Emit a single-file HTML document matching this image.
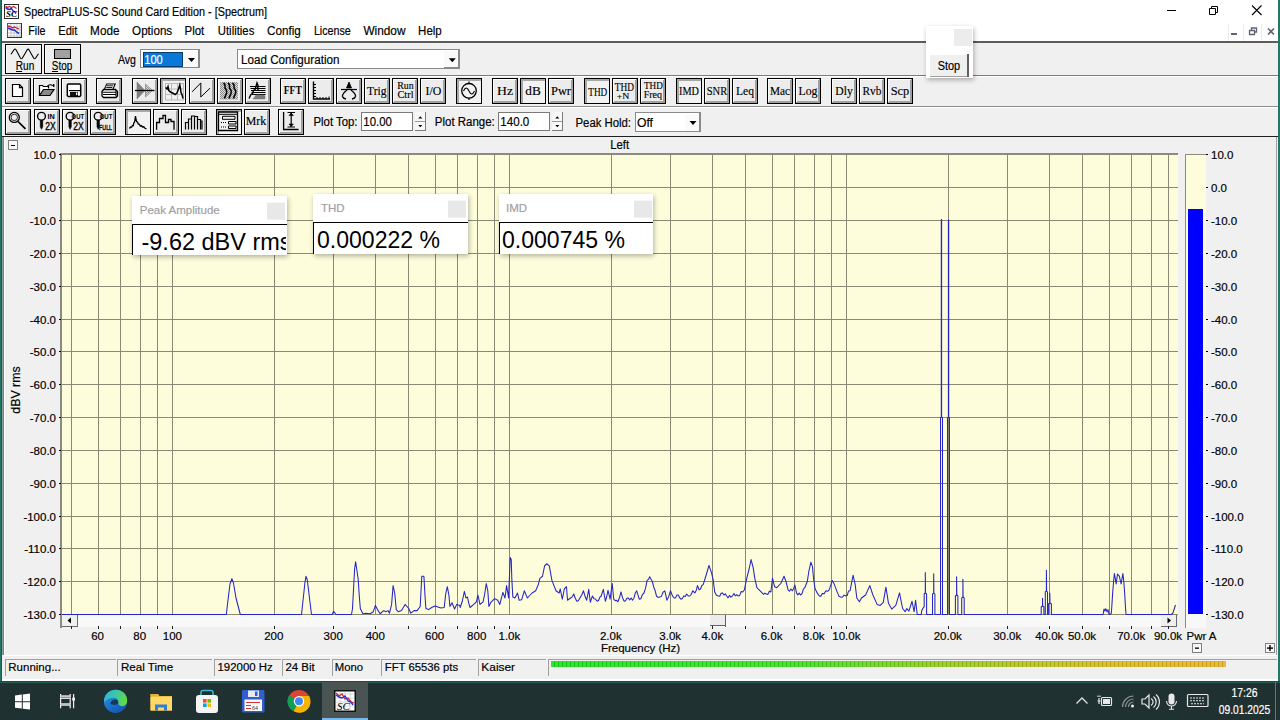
<!DOCTYPE html><html><head><meta charset="utf-8"><title>SpectraPLUS-SC</title><style>html,body{margin:0;padding:0;width:1280px;height:720px;overflow:hidden;background:#f0f0f0}svg{display:block}</style></head><body>
<svg width="1280" height="720" viewBox="0 0 1280 720">
<rect x="0" y="0" width="1280" height="720" fill="#f0f0f0" />
<rect x="0" y="0" width="1280" height="41" fill="#ffffff" />
<rect x="0" y="41" width="1280" height="2" fill="#5c5c5c" />
<rect x="0" y="75" width="1280" height="1" fill="#7a7a7a" />
<rect x="0" y="76" width="1280" height="1" fill="#ffffff" />
<rect x="0" y="106" width="1280" height="1" fill="#8a8a8a" />
<rect x="0" y="107" width="1280" height="1" fill="#ffffff" />
<rect x="0" y="136" width="1280" height="1" fill="#202020" />
<text x="24" y="15.6" font-family='"Liberation Sans", sans-serif' font-size="12" fill="#000" text-anchor="start" textLength="243" lengthAdjust="spacingAndGlyphs" stroke="#000" stroke-width="0.18" >SpectraPLUS-SC Sound Card Edition - [Spectrum]</text>
<text x="28.25" y="34.7" font-family='"Liberation Sans", sans-serif' font-size="12" fill="#000" text-anchor="start" textLength="17.2" lengthAdjust="spacingAndGlyphs" stroke="#000" stroke-width="0.18" >File</text>
<text x="58.25" y="34.7" font-family='"Liberation Sans", sans-serif' font-size="12" fill="#000" text-anchor="start" textLength="19.2" lengthAdjust="spacingAndGlyphs" stroke="#000" stroke-width="0.18" >Edit</text>
<text x="90.1" y="34.7" font-family='"Liberation Sans", sans-serif' font-size="12" fill="#000" text-anchor="start" textLength="29.4" lengthAdjust="spacingAndGlyphs" stroke="#000" stroke-width="0.18" >Mode</text>
<text x="132.1" y="34.7" font-family='"Liberation Sans", sans-serif' font-size="12" fill="#000" text-anchor="start" textLength="40.1" lengthAdjust="spacingAndGlyphs" stroke="#000" stroke-width="0.18" >Options</text>
<text x="184.5" y="34.7" font-family='"Liberation Sans", sans-serif' font-size="12" fill="#000" text-anchor="start" textLength="19.8" lengthAdjust="spacingAndGlyphs" stroke="#000" stroke-width="0.18" >Plot</text>
<text x="217.8" y="34.7" font-family='"Liberation Sans", sans-serif' font-size="12" fill="#000" text-anchor="start" textLength="36.5" lengthAdjust="spacingAndGlyphs" stroke="#000" stroke-width="0.18" >Utilities</text>
<text x="267.0" y="34.7" font-family='"Liberation Sans", sans-serif' font-size="12" fill="#000" text-anchor="start" textLength="33.8" lengthAdjust="spacingAndGlyphs" stroke="#000" stroke-width="0.18" >Config</text>
<text x="313.9" y="34.7" font-family='"Liberation Sans", sans-serif' font-size="12" fill="#000" text-anchor="start" textLength="36.9" lengthAdjust="spacingAndGlyphs" stroke="#000" stroke-width="0.18" >License</text>
<text x="363.4" y="34.7" font-family='"Liberation Sans", sans-serif' font-size="12" fill="#000" text-anchor="start" textLength="42.1" lengthAdjust="spacingAndGlyphs" stroke="#000" stroke-width="0.18" >Window</text>
<text x="418.1" y="34.7" font-family='"Liberation Sans", sans-serif' font-size="12" fill="#000" text-anchor="start" textLength="23.6" lengthAdjust="spacingAndGlyphs" stroke="#000" stroke-width="0.18" >Help</text>
<rect x="5" y="44" width="37" height="30" fill="#000" />
<rect x="6" y="45" width="35" height="28" fill="#ffffff" />
<rect x="7" y="46" width="34" height="27" fill="#efefef" />
<rect x="44" y="44" width="37" height="30" fill="#000" />
<rect x="45" y="45" width="35" height="28" fill="#ffffff" />
<rect x="46" y="46" width="34" height="27" fill="#efefef" />
<path d="M11,54.3 L14,49.8 Q15,48.3 16,49.8 L20.4,58 Q21.4,59.6 22.4,58 L27.1,50 Q28.1,48.3 29.1,50 L33.6,58 Q34.6,59.6 35.6,58 L38.5,53.7" fill="none" stroke="#000" stroke-width="1.1"/>
<text x="15.8" y="69.8" font-family='"Liberation Sans", sans-serif' font-size="12" fill="#000" text-anchor="start" textLength="18.5" lengthAdjust="spacingAndGlyphs" stroke="#000" stroke-width="0.18" >Run</text>
<rect x="16" y="71" width="6" height="1" fill="#000" />
<rect x="54" y="49" width="17" height="10" fill="#000" />
<rect x="55" y="50" width="15" height="8" fill="#a0a0a0" />
<text x="51.8" y="69.8" font-family='"Liberation Sans", sans-serif' font-size="12" fill="#000" text-anchor="start" textLength="20.5" lengthAdjust="spacingAndGlyphs" stroke="#000" stroke-width="0.18" >Stop</text>
<rect x="52" y="71" width="6" height="1" fill="#000" />
<text x="118" y="63.5" font-family='"Liberation Sans", sans-serif' font-size="12" fill="#000" text-anchor="start" textLength="18" lengthAdjust="spacingAndGlyphs" stroke="#000" stroke-width="0.18" >Avg</text>
<rect x="140" y="49" width="60" height="19" fill="#8a8a8a" />
<rect x="141" y="50" width="58" height="17" fill="#ffffff" />
<rect x="143" y="52" width="40" height="15" fill="#0a78d8" />
<rect x="143.5" y="52.5" width="39" height="14" fill="none" stroke="#000" stroke-width="1" stroke-dasharray="1,1"/>
<text x="144.3" y="63.8" font-family='"Liberation Sans", sans-serif' font-size="12" fill="#ffffff" text-anchor="start" textLength="18.5" lengthAdjust="spacingAndGlyphs" stroke="#ffffff" stroke-width="0.18" >100</text>
<rect x="184" y="51" width="15" height="16" fill="#fafafa" />
<rect x="198" y="50" width="1" height="18" fill="#8a8a8a" />
<rect x="184" y="67" width="15" height="1" fill="#8a8a8a" />
<path d="M188,58 L195,58 L191.5,62 Z" fill="#000"/>
<rect x="237" y="49" width="223" height="20" fill="#8a8a8a" />
<rect x="238" y="50" width="221" height="18" fill="#ffffff" />
<text x="241" y="63.7" font-family='"Liberation Sans", sans-serif' font-size="12" fill="#000" text-anchor="start" textLength="98.5" lengthAdjust="spacingAndGlyphs" stroke="#000" stroke-width="0.18" >Load Configuration</text>
<rect x="444" y="51" width="15" height="16" fill="#fafafa" />
<rect x="458" y="50" width="1" height="19" fill="#8a8a8a" />
<rect x="444" y="67" width="15" height="1" fill="#8a8a8a" />
<path d="M448.8,58.2 L455.8,58.2 L452.3,62.2 Z" fill="#000"/>
<rect x="5" y="78" width="26" height="26" fill="#000" />
<rect x="6" y="79" width="24" height="24" fill="#a0a0a0" />
<rect x="6" y="79" width="23" height="1" fill="#ffffff" />
<rect x="6" y="79" width="1" height="23" fill="#ffffff" />
<rect x="7" y="80" width="21" height="21" fill="#ececec" />
<rect x="33" y="78" width="26" height="26" fill="#000" />
<rect x="34" y="79" width="24" height="24" fill="#a0a0a0" />
<rect x="34" y="79" width="23" height="1" fill="#ffffff" />
<rect x="34" y="79" width="1" height="23" fill="#ffffff" />
<rect x="35" y="80" width="21" height="21" fill="#ececec" />
<rect x="61" y="78" width="26" height="26" fill="#000" />
<rect x="62" y="79" width="24" height="24" fill="#a0a0a0" />
<rect x="62" y="79" width="23" height="1" fill="#ffffff" />
<rect x="62" y="79" width="1" height="23" fill="#ffffff" />
<rect x="63" y="80" width="21" height="21" fill="#ececec" />
<rect x="96" y="78" width="26" height="26" fill="#000" />
<rect x="97" y="79" width="24" height="24" fill="#a0a0a0" />
<rect x="97" y="79" width="23" height="1" fill="#ffffff" />
<rect x="97" y="79" width="1" height="23" fill="#ffffff" />
<rect x="98" y="80" width="21" height="21" fill="#ececec" />
<rect x="132" y="78" width="26" height="26" fill="#000" />
<rect x="133" y="79" width="24" height="24" fill="#a0a0a0" />
<rect x="133" y="79" width="23" height="1" fill="#ffffff" />
<rect x="133" y="79" width="1" height="23" fill="#ffffff" />
<rect x="134" y="80" width="21" height="21" fill="#ececec" />
<rect x="160" y="78" width="26" height="26" fill="#000" />
<rect x="161" y="79" width="24" height="24" fill="#a8a8a8" />
<rect x="163" y="81" width="22" height="22" fill="#f2f2f2" />
<rect x="189" y="78" width="26" height="26" fill="#000" />
<rect x="190" y="79" width="24" height="24" fill="#a0a0a0" />
<rect x="190" y="79" width="23" height="1" fill="#ffffff" />
<rect x="190" y="79" width="1" height="23" fill="#ffffff" />
<rect x="191" y="80" width="21" height="21" fill="#ececec" />
<rect x="217" y="78" width="26" height="26" fill="#000" />
<rect x="218" y="79" width="24" height="24" fill="#a0a0a0" />
<rect x="218" y="79" width="23" height="1" fill="#ffffff" />
<rect x="218" y="79" width="1" height="23" fill="#ffffff" />
<rect x="219" y="80" width="21" height="21" fill="#ececec" />
<rect x="245" y="78" width="26" height="26" fill="#000" />
<rect x="246" y="79" width="24" height="24" fill="#a0a0a0" />
<rect x="246" y="79" width="23" height="1" fill="#ffffff" />
<rect x="246" y="79" width="1" height="23" fill="#ffffff" />
<rect x="247" y="80" width="21" height="21" fill="#ececec" />
<rect x="280" y="78" width="26" height="26" fill="#000" />
<rect x="281" y="79" width="24" height="24" fill="#a0a0a0" />
<rect x="281" y="79" width="23" height="1" fill="#ffffff" />
<rect x="281" y="79" width="1" height="23" fill="#ffffff" />
<rect x="282" y="80" width="21" height="21" fill="#ececec" />
<rect x="308" y="78" width="26" height="26" fill="#000" />
<rect x="309" y="79" width="24" height="24" fill="#a0a0a0" />
<rect x="309" y="79" width="23" height="1" fill="#ffffff" />
<rect x="309" y="79" width="1" height="23" fill="#ffffff" />
<rect x="310" y="80" width="21" height="21" fill="#ececec" />
<rect x="336" y="78" width="26" height="26" fill="#000" />
<rect x="337" y="79" width="24" height="24" fill="#a0a0a0" />
<rect x="337" y="79" width="23" height="1" fill="#ffffff" />
<rect x="337" y="79" width="1" height="23" fill="#ffffff" />
<rect x="338" y="80" width="21" height="21" fill="#ececec" />
<rect x="364" y="78" width="26" height="26" fill="#000" />
<rect x="365" y="79" width="24" height="24" fill="#a0a0a0" />
<rect x="365" y="79" width="23" height="1" fill="#ffffff" />
<rect x="365" y="79" width="1" height="23" fill="#ffffff" />
<rect x="366" y="80" width="21" height="21" fill="#ececec" />
<rect x="392" y="78" width="26" height="26" fill="#000" />
<rect x="393" y="79" width="24" height="24" fill="#a0a0a0" />
<rect x="393" y="79" width="23" height="1" fill="#ffffff" />
<rect x="393" y="79" width="1" height="23" fill="#ffffff" />
<rect x="394" y="80" width="21" height="21" fill="#ececec" />
<rect x="420" y="78" width="26" height="26" fill="#000" />
<rect x="421" y="79" width="24" height="24" fill="#a0a0a0" />
<rect x="421" y="79" width="23" height="1" fill="#ffffff" />
<rect x="421" y="79" width="1" height="23" fill="#ffffff" />
<rect x="422" y="80" width="21" height="21" fill="#ececec" />
<rect x="456" y="78" width="26" height="26" fill="#000" />
<rect x="457" y="79" width="24" height="24" fill="#a8a8a8" />
<rect x="459" y="81" width="22" height="22" fill="#f2f2f2" />
<rect x="492" y="78" width="26" height="26" fill="#000" />
<rect x="493" y="79" width="24" height="24" fill="#a0a0a0" />
<rect x="493" y="79" width="23" height="1" fill="#ffffff" />
<rect x="493" y="79" width="1" height="23" fill="#ffffff" />
<rect x="494" y="80" width="21" height="21" fill="#ececec" />
<rect x="520" y="78" width="26" height="26" fill="#000" />
<rect x="521" y="79" width="24" height="24" fill="#a8a8a8" />
<rect x="523" y="81" width="22" height="22" fill="#f2f2f2" />
<rect x="548" y="78" width="26" height="26" fill="#000" />
<rect x="549" y="79" width="24" height="24" fill="#a0a0a0" />
<rect x="549" y="79" width="23" height="1" fill="#ffffff" />
<rect x="549" y="79" width="1" height="23" fill="#ffffff" />
<rect x="550" y="80" width="21" height="21" fill="#ececec" />
<rect x="584" y="78" width="26" height="26" fill="#000" />
<rect x="585" y="79" width="24" height="24" fill="#a8a8a8" />
<rect x="587" y="81" width="22" height="22" fill="#f2f2f2" />
<rect x="612" y="78" width="26" height="26" fill="#000" />
<rect x="613" y="79" width="24" height="24" fill="#a0a0a0" />
<rect x="613" y="79" width="23" height="1" fill="#ffffff" />
<rect x="613" y="79" width="1" height="23" fill="#ffffff" />
<rect x="614" y="80" width="21" height="21" fill="#ececec" />
<rect x="640" y="78" width="26" height="26" fill="#000" />
<rect x="641" y="79" width="24" height="24" fill="#a0a0a0" />
<rect x="641" y="79" width="23" height="1" fill="#ffffff" />
<rect x="641" y="79" width="1" height="23" fill="#ffffff" />
<rect x="642" y="80" width="21" height="21" fill="#ececec" />
<rect x="676" y="78" width="26" height="26" fill="#000" />
<rect x="677" y="79" width="24" height="24" fill="#a8a8a8" />
<rect x="679" y="81" width="22" height="22" fill="#f2f2f2" />
<rect x="704" y="78" width="26" height="26" fill="#000" />
<rect x="705" y="79" width="24" height="24" fill="#a0a0a0" />
<rect x="705" y="79" width="23" height="1" fill="#ffffff" />
<rect x="705" y="79" width="1" height="23" fill="#ffffff" />
<rect x="706" y="80" width="21" height="21" fill="#ececec" />
<rect x="732" y="78" width="26" height="26" fill="#000" />
<rect x="733" y="79" width="24" height="24" fill="#a0a0a0" />
<rect x="733" y="79" width="23" height="1" fill="#ffffff" />
<rect x="733" y="79" width="1" height="23" fill="#ffffff" />
<rect x="734" y="80" width="21" height="21" fill="#ececec" />
<rect x="767" y="78" width="26" height="26" fill="#000" />
<rect x="768" y="79" width="24" height="24" fill="#a0a0a0" />
<rect x="768" y="79" width="23" height="1" fill="#ffffff" />
<rect x="768" y="79" width="1" height="23" fill="#ffffff" />
<rect x="769" y="80" width="21" height="21" fill="#ececec" />
<rect x="795" y="78" width="26" height="26" fill="#000" />
<rect x="796" y="79" width="24" height="24" fill="#a0a0a0" />
<rect x="796" y="79" width="23" height="1" fill="#ffffff" />
<rect x="796" y="79" width="1" height="23" fill="#ffffff" />
<rect x="797" y="80" width="21" height="21" fill="#ececec" />
<rect x="831" y="78" width="26" height="26" fill="#000" />
<rect x="832" y="79" width="24" height="24" fill="#a0a0a0" />
<rect x="832" y="79" width="23" height="1" fill="#ffffff" />
<rect x="832" y="79" width="1" height="23" fill="#ffffff" />
<rect x="833" y="80" width="21" height="21" fill="#ececec" />
<rect x="859" y="78" width="26" height="26" fill="#000" />
<rect x="860" y="79" width="24" height="24" fill="#a0a0a0" />
<rect x="860" y="79" width="23" height="1" fill="#ffffff" />
<rect x="860" y="79" width="1" height="23" fill="#ffffff" />
<rect x="861" y="80" width="21" height="21" fill="#ececec" />
<rect x="887" y="78" width="26" height="26" fill="#000" />
<rect x="888" y="79" width="24" height="24" fill="#a0a0a0" />
<rect x="888" y="79" width="23" height="1" fill="#ffffff" />
<rect x="888" y="79" width="1" height="23" fill="#ffffff" />
<rect x="889" y="80" width="21" height="21" fill="#ececec" />
<rect x="5" y="109" width="26" height="26" fill="#000" />
<rect x="6" y="110" width="24" height="24" fill="#a0a0a0" />
<rect x="6" y="110" width="23" height="1" fill="#ffffff" />
<rect x="6" y="110" width="1" height="23" fill="#ffffff" />
<rect x="7" y="111" width="21" height="21" fill="#ececec" />
<rect x="34" y="109" width="26" height="26" fill="#000" />
<rect x="35" y="110" width="24" height="24" fill="#a0a0a0" />
<rect x="35" y="110" width="23" height="1" fill="#ffffff" />
<rect x="35" y="110" width="1" height="23" fill="#ffffff" />
<rect x="36" y="111" width="21" height="21" fill="#ececec" />
<rect x="62" y="109" width="26" height="26" fill="#000" />
<rect x="63" y="110" width="24" height="24" fill="#a0a0a0" />
<rect x="63" y="110" width="23" height="1" fill="#ffffff" />
<rect x="63" y="110" width="1" height="23" fill="#ffffff" />
<rect x="64" y="111" width="21" height="21" fill="#ececec" />
<rect x="90" y="109" width="26" height="26" fill="#000" />
<rect x="91" y="110" width="24" height="24" fill="#a0a0a0" />
<rect x="91" y="110" width="23" height="1" fill="#ffffff" />
<rect x="91" y="110" width="1" height="23" fill="#ffffff" />
<rect x="92" y="111" width="21" height="21" fill="#ececec" />
<rect x="125" y="109" width="26" height="26" fill="#000" />
<rect x="126" y="110" width="24" height="24" fill="#a8a8a8" />
<rect x="128" y="112" width="22" height="22" fill="#f2f2f2" />
<rect x="153" y="109" width="26" height="26" fill="#000" />
<rect x="154" y="110" width="24" height="24" fill="#a0a0a0" />
<rect x="154" y="110" width="23" height="1" fill="#ffffff" />
<rect x="154" y="110" width="1" height="23" fill="#ffffff" />
<rect x="155" y="111" width="21" height="21" fill="#ececec" />
<rect x="181" y="109" width="26" height="26" fill="#000" />
<rect x="182" y="110" width="24" height="24" fill="#a0a0a0" />
<rect x="182" y="110" width="23" height="1" fill="#ffffff" />
<rect x="182" y="110" width="1" height="23" fill="#ffffff" />
<rect x="183" y="111" width="21" height="21" fill="#ececec" />
<rect x="216" y="109" width="26" height="26" fill="#000" />
<rect x="217" y="110" width="24" height="24" fill="#a8a8a8" />
<rect x="219" y="112" width="22" height="22" fill="#f2f2f2" />
<rect x="244" y="109" width="26" height="26" fill="#000" />
<rect x="245" y="110" width="24" height="24" fill="#a0a0a0" />
<rect x="245" y="110" width="23" height="1" fill="#ffffff" />
<rect x="245" y="110" width="1" height="23" fill="#ffffff" />
<rect x="246" y="111" width="21" height="21" fill="#ececec" />
<rect x="278" y="109" width="26" height="26" fill="#000" />
<rect x="279" y="110" width="24" height="24" fill="#a0a0a0" />
<rect x="279" y="110" width="23" height="1" fill="#ffffff" />
<rect x="279" y="110" width="1" height="23" fill="#ffffff" />
<rect x="280" y="111" width="21" height="21" fill="#ececec" />
<text x="313.5" y="126.1" font-family='"Liberation Sans", sans-serif' font-size="12" fill="#000" text-anchor="start" textLength="44" lengthAdjust="spacingAndGlyphs" stroke="#000" stroke-width="0.18" >Plot Top:</text>
<rect x="361" y="112" width="52" height="19" fill="#7a7a7a" />
<rect x="362" y="113" width="50" height="17" fill="#ffffff" />
<text x="363.3" y="125.6" font-family='"Liberation Sans", sans-serif' font-size="12" fill="#000" text-anchor="start" textLength="28.5" lengthAdjust="spacingAndGlyphs" stroke="#000" stroke-width="0.18" >10.00</text>
<rect x="415" y="112" width="11" height="19" fill="#f8f8f8" />
<rect x="425" y="112" width="1" height="19" fill="#7a7a7a" />
<rect x="415" y="130" width="11" height="1" fill="#7a7a7a" />
<rect x="415" y="121" width="10" height="1" fill="#9a9a9a" />
<path d="M418.3,118.5 L422.3,118.5 L420.3,116.3 Z M418.3,125 L422.3,125 L420.3,127.2 Z" fill="#000"/>
<text x="434.8" y="126.1" font-family='"Liberation Sans", sans-serif' font-size="12" fill="#000" text-anchor="start" textLength="60" lengthAdjust="spacingAndGlyphs" stroke="#000" stroke-width="0.18" >Plot Range:</text>
<rect x="498" y="112" width="52" height="19" fill="#7a7a7a" />
<rect x="499" y="113" width="50" height="17" fill="#ffffff" />
<text x="500.3" y="125.6" font-family='"Liberation Sans", sans-serif' font-size="12" fill="#000" text-anchor="start" textLength="29" lengthAdjust="spacingAndGlyphs" stroke="#000" stroke-width="0.18" >140.0</text>
<rect x="552" y="112" width="11" height="19" fill="#f8f8f8" />
<rect x="562" y="112" width="1" height="19" fill="#7a7a7a" />
<rect x="552" y="130" width="11" height="1" fill="#7a7a7a" />
<rect x="552" y="121" width="10" height="1" fill="#9a9a9a" />
<path d="M555.3,118.5 L559.3,118.5 L557.3,116.3 Z M555.3,125 L559.3,125 L557.3,127.2 Z" fill="#000"/>
<text x="575.5" y="126.6" font-family='"Liberation Sans", sans-serif' font-size="12" fill="#000" text-anchor="start" textLength="55.5" lengthAdjust="spacingAndGlyphs" stroke="#000" stroke-width="0.18" >Peak Hold:</text>
<rect x="635" y="112" width="66" height="20" fill="#8a8a8a" />
<rect x="636" y="113" width="64" height="18" fill="#ffffff" />
<text x="637" y="126.5" font-family='"Liberation Sans", sans-serif' font-size="12" fill="#000" text-anchor="start" textLength="16" lengthAdjust="spacingAndGlyphs" stroke="#000" stroke-width="0.18" >Off</text>
<rect x="685" y="114" width="15" height="17" fill="#fafafa" />
<rect x="699" y="113" width="1" height="19" fill="#8a8a8a" />
<rect x="685" y="131" width="15" height="1" fill="#8a8a8a" />
<path d="M689.5,121 L696.5,121 L693,125 Z" fill="#000"/>
<path d="M12.5,84.5 h7 l3,3 v9 h-10 z" fill="#fff" stroke="#000" stroke-width="1.2" />
<path d="M19.5,84.5 v3.2 h3" fill="none" stroke="#000" stroke-width="1.2" />
<path d="M39.5,95.5 v-10 h3 l1,1 h5 v2" fill="#fff" stroke="#000" stroke-width="1.2" />
<path d="M39.5,95.5 l4,-6 h10.5 l-4,6 z" fill="#8a8a8a" stroke="#000" stroke-width="1.2" />
<path d="M47,86.5 q2.5,-3 5.5,-1" fill="none" stroke="#000" stroke-width="1.1" />
<path d="M52.5,85.5 l1.5,-1.5 l0,3 z" fill="#000" stroke="#000" stroke-width="0.8" />
<path d="M68.5,84 h11 a1.2,1.2 0 0 1 1.2,1.2 v10 a1.2,1.2 0 0 1 -1.2,1.2 h-11 a1.2,1.2 0 0 1 -1.2,-1.2 v-10 a1.2,1.2 0 0 1 1.2,-1.2 z" fill="#fff" stroke="#000" stroke-width="1.5" />
<rect x="69" y="90" width="11" height="1.2" fill="#000" />
<rect x="70" y="92" width="8" height="4.5" fill="#101010" />
<rect x="76" y="92.5" width="1.3" height="2.5" fill="#fff" />
<path d="M104.5,89 l2.2,-5 h8.5 l-2.2,5" fill="#fff" stroke="#000" stroke-width="1.1" />
<path d="M107,85.8 h6 M106.3,87.5 h6" fill="none" stroke="#000" stroke-width="0.9" />
<path d="M103.5,89.5 h12 l2,2 v4.5 l-1.5,1.5 h-12.5 l-1.5,-1.5 v-4.5 z" fill="#fff" stroke="#000" stroke-width="1.3" />
<path d="M102.5,92.3 h13.5 M103,94.5 h13 M116,90 v6.5" fill="none" stroke="#000" stroke-width="1.1" />
<path d="M137,82 L145,90.5 L137,99 Z" fill="#808080" stroke="#707070" stroke-width="0.5" />
<path d="M145.5,84 L152.5,90.5 L145.5,97 Z" fill="url(#dith)" stroke="#606060" stroke-width="0.5" />
<path d="M135,90.5 h19.5" fill="none" stroke="#000" stroke-width="1.3" />
<rect x="165" y="83" width="1" height="17" fill="#b8b8b8" />
<rect x="165" y="83.0" width="19" height="1" fill="#b8b8b8" />
<rect x="171" y="83" width="1" height="17" fill="#b8b8b8" />
<rect x="165" y="88.5" width="19" height="1" fill="#b8b8b8" />
<rect x="177" y="83" width="1" height="17" fill="#b8b8b8" />
<rect x="165" y="94.0" width="19" height="1" fill="#b8b8b8" />
<rect x="183" y="83" width="1" height="17" fill="#b8b8b8" />
<rect x="165" y="99.5" width="19" height="1" fill="#b8b8b8" />
<path d="M165.5,87.5 L167,89 L168,86.5 L168.8,90.5 L170.5,92 L173,93.2 L175,94.5 L177,93 L178.5,89 L179.8,85 L180.5,88.5 L181,92.5 L182,94.5 L183,98.5" fill="none" stroke="#000" stroke-width="1.5" />
<path d="M192.2,91.8 L200.8,82.9 L200.8,97 L210,88.2" fill="none" stroke="#000" stroke-width="1.0" />
<pattern id="dith" width="2" height="2" patternUnits="userSpaceOnUse"><rect width="2" height="2" fill="#d8d8d8"/><rect width="1" height="1" fill="#909090"/><rect x="1" y="1" width="1" height="1" fill="#909090"/></pattern>
<rect x="220" y="82" width="18" height="17.5" fill="url(#dith)" />
<path d="M223.5,83 q2,1.5 1.5,3.5 q-0.5,1.5 1,3 q1.5,2 0.5,4 q-1,2 -2,5" fill="none" stroke="#000" stroke-width="1.6" />
<path d="M228.0,83 q2,1.5 1.5,3.5 q-0.5,1.5 1,3 q1.5,2 0.5,4 q-1,2 -2,5" fill="none" stroke="#000" stroke-width="1.6" />
<path d="M232.5,83 q2,1.5 1.5,3.5 q-0.5,1.5 1,3 q1.5,2 0.5,4 q-1,2 -2,5" fill="none" stroke="#000" stroke-width="1.6" />
<path d="M250.0,86.5 h15.5" fill="none" stroke="#000" stroke-width="1.0" />
<path d="M250.5,88.5 h15.0" fill="none" stroke="#000" stroke-width="1.0" />
<path d="M251.0,90.5 h14.5" fill="none" stroke="#000" stroke-width="1.0" />
<path d="M251.5,92.5 h14.0" fill="none" stroke="#000" stroke-width="1.0" />
<path d="M252.0,94.5 h13.5" fill="none" stroke="#000" stroke-width="1.0" />
<path d="M249,98.5 l2,-4 l1.5,-1 l1,-3 l1.5,-1 l1,-3 l1,-3.5 l1.2,3 l-0.5,2 l0.5,3" fill="none" stroke="#000" stroke-width="1.4" />
<path d="M253,99 h12 v-3 l-1,-1 h-8 z" fill="#7a7a7a" stroke="#7a7a7a" stroke-width="0.5" />
<text x="292.8" y="94" font-family='"Liberation Serif", serif' font-size="12" text-anchor="middle" stroke="#000" stroke-width="0" font-weight="bold" textLength="18" lengthAdjust="spacingAndGlyphs">FFT</text>
<path d="M313.5,81.5 v17.5 h16.5" fill="none" stroke="#000" stroke-width="1.4" />
<path d="M313.5,84.5 h2.5 M313.5,87.5 h2.5 M313.5,90.5 h2.5 M313.5,93.5 h2.5 M313.5,96.5 h2.5 M317,99 v-2 M320,99 v-2 M323,99 v-2 M326,99 v-2 M329,99 v-2.5" fill="none" stroke="#000" stroke-width="1.0" />
<path d="M349,82 L346.5,88 h5 z" fill="#000" stroke="#000" stroke-width="0.8" />
<path d="M341,89.5 h16" fill="none" stroke="#000" stroke-width="1.2" />
<path d="M347,90 q-5,4 -4.5,6.5 q0.5,2 3.5,2.5 M351,90 q5,4 4.5,6.5 q-0.5,2 -3.5,2.5" fill="none" stroke="#000" stroke-width="1.3" />
<text x="376.8" y="94.6" font-family='"Liberation Serif", serif' font-size="12.5" text-anchor="middle" stroke="#000" stroke-width="0.15" textLength="19.5" lengthAdjust="spacingAndGlyphs">Trig</text>
<text x="405.5" y="88.7" font-family='"Liberation Serif", serif' font-size="10.5" text-anchor="middle" stroke="#000" stroke-width="0.15" textLength="16.5" lengthAdjust="spacingAndGlyphs">Run</text>
<text x="405.5" y="98.3" font-family='"Liberation Serif", serif' font-size="10.5" text-anchor="middle" stroke="#000" stroke-width="0.15" textLength="16.2" lengthAdjust="spacingAndGlyphs">Ctrl</text>
<text x="433.5" y="94.6" font-family='"Liberation Serif", serif' font-size="12.5" text-anchor="middle" stroke="#000" stroke-width="0.15" textLength="15.8" lengthAdjust="spacingAndGlyphs">I/O</text>
<path d="M469,81.5 v2 M469,98 v2" fill="none" stroke="#000" stroke-width="1.2" />
<circle cx="469" cy="90.8" r="7.3" fill="none" stroke="#000" stroke-width="1.3"/>
<path d="M463.5,91 q2.75,-6 5.5,0 q2.75,6 5.5,0" fill="none" stroke="#000" stroke-width="1.1" />
<text x="505" y="94.5" font-family='"Liberation Serif", serif' font-size="12.5" text-anchor="middle" stroke="#000" stroke-width="0.15" textLength="16" lengthAdjust="spacingAndGlyphs">Hz</text>
<text x="533" y="94.8" font-family='"Liberation Serif", serif' font-size="12.5" text-anchor="middle" stroke="#000" stroke-width="0.15" textLength="15.5" lengthAdjust="spacingAndGlyphs">dB</text>
<text x="561" y="94.5" font-family='"Liberation Serif", serif' font-size="12.5" text-anchor="middle" stroke="#000" stroke-width="0.15" textLength="20" lengthAdjust="spacingAndGlyphs">Pwr</text>
<text x="597.8" y="95.5" font-family='"Liberation Serif", serif' font-size="12.5" text-anchor="middle" stroke="#000" stroke-width="0.15" textLength="19" lengthAdjust="spacingAndGlyphs">THD</text>
<text x="624.4" y="90.5" font-family='"Liberation Serif", serif' font-size="12" text-anchor="middle" stroke="#000" stroke-width="0.15" textLength="19.2" lengthAdjust="spacingAndGlyphs">THD</text>
<text x="623" y="99.2" font-family='"Liberation Serif", serif' font-size="9" text-anchor="middle" stroke="#000" stroke-width="0.15" textLength="12.6" lengthAdjust="spacingAndGlyphs">+N</text>
<text x="653.4" y="88.9" font-family='"Liberation Serif", serif' font-size="11" text-anchor="middle" stroke="#000" stroke-width="0.15" textLength="18.8" lengthAdjust="spacingAndGlyphs">THD</text>
<text x="652.9" y="98.3" font-family='"Liberation Serif", serif' font-size="11" text-anchor="middle" stroke="#000" stroke-width="0.15" textLength="18.3" lengthAdjust="spacingAndGlyphs">Freq</text>
<text x="689" y="94.8" font-family='"Liberation Serif", serif' font-size="12" text-anchor="middle" stroke="#000" stroke-width="0.15" textLength="20" lengthAdjust="spacingAndGlyphs">IMD</text>
<text x="717" y="94.5" font-family='"Liberation Serif", serif' font-size="12" text-anchor="middle" stroke="#000" stroke-width="0.15" textLength="20.5" lengthAdjust="spacingAndGlyphs">SNR</text>
<text x="745" y="94.5" font-family='"Liberation Serif", serif' font-size="12.5" text-anchor="middle" stroke="#000" stroke-width="0.15" textLength="18" lengthAdjust="spacingAndGlyphs">Leq</text>
<text x="780" y="94.5" font-family='"Liberation Serif", serif' font-size="12.5" text-anchor="middle" stroke="#000" stroke-width="0.15" textLength="20" lengthAdjust="spacingAndGlyphs">Mac</text>
<text x="808" y="94.5" font-family='"Liberation Serif", serif' font-size="12.5" text-anchor="middle" stroke="#000" stroke-width="0.15" textLength="19" lengthAdjust="spacingAndGlyphs">Log</text>
<text x="844" y="94.5" font-family='"Liberation Serif", serif' font-size="12.5" text-anchor="middle" stroke="#000" stroke-width="0.15" textLength="17.5" lengthAdjust="spacingAndGlyphs">Dly</text>
<text x="872" y="94.5" font-family='"Liberation Serif", serif' font-size="12.5" text-anchor="middle" stroke="#000" stroke-width="0.15" textLength="19" lengthAdjust="spacingAndGlyphs">Rvb</text>
<text x="900" y="94.5" font-family='"Liberation Serif", serif' font-size="12.5" text-anchor="middle" stroke="#000" stroke-width="0.15" textLength="18.5" lengthAdjust="spacingAndGlyphs">Scp</text>
<circle cx="14.3" cy="117.4" r="5" fill="none" stroke="#000" stroke-width="1.3"/><circle cx="14.3" cy="117.4" r="3.2" fill="none" stroke="#000" stroke-width="0.8"/>
<path d="M18,121.5 L25.5,128.8" fill="none" stroke="#000" stroke-width="1.7" />
<circle cx="41.5" cy="116.3" r="3.9" fill="none" stroke="#000" stroke-width="1.4"/>
<path d="M40.3,120.3 h2.4 v6.5 l-1.2,2.5 l-1.2,-2.5 z" fill="#000" stroke="#000" stroke-width="0.6" />
<text x="47.4" y="118.9" font-family='"Liberation Sans", sans-serif' font-size="6.5" font-weight="bold" textLength="7.3" lengthAdjust="spacingAndGlyphs">IN</text>
<text x="45.2" y="129.8" font-family='"Liberation Sans", sans-serif' font-size="10" stroke="#000" stroke-width="0.35" textLength="10.4" lengthAdjust="spacingAndGlyphs">2X</text>
<circle cx="70.1" cy="116.3" r="3.9" fill="none" stroke="#000" stroke-width="1.4"/>
<path d="M68.89999999999999,120.3 h2.4 v6.5 l-1.2,2.5 l-1.2,-2.5 z" fill="#000" stroke="#000" stroke-width="0.6" />
<text x="71.6" y="118.9" font-family='"Liberation Sans", sans-serif' font-size="6.5" font-weight="bold" textLength="12.7" lengthAdjust="spacingAndGlyphs">OUT</text>
<text x="73.3" y="129.8" font-family='"Liberation Sans", sans-serif' font-size="10" stroke="#000" stroke-width="0.35" textLength="10.4" lengthAdjust="spacingAndGlyphs">2X</text>
<circle cx="98.2" cy="116.3" r="3.9" fill="none" stroke="#000" stroke-width="1.4"/>
<path d="M97.0,120.3 h2.4 v6.5 l-1.2,2.5 l-1.2,-2.5 z" fill="#000" stroke="#000" stroke-width="0.6" />
<text x="99.7" y="118.9" font-family='"Liberation Sans", sans-serif' font-size="6.5" font-weight="bold" textLength="12.7" lengthAdjust="spacingAndGlyphs">OUT</text>
<text x="99.1" y="129.8" font-family='"Liberation Sans", sans-serif' font-size="6.8" stroke="#000" stroke-width="0.35" textLength="12.9" lengthAdjust="spacingAndGlyphs">FULL</text>
<path d="M129.4,128.5 L130.5,127 L131.5,127.3 L132.5,125.4 L133.3,125.6 L133.8,123 L134.6,122 L135,119.5 L135.5,116 L136,119.5 L136.6,121.5 L137.6,122.2 L138.2,124 L139.4,124.3 L140.2,126 L141.6,125.8 L142.5,127 L143.8,126.8 L145,128.3 L146.5,128.8" fill="none" stroke="#000" stroke-width="1.3" />
<path d="M156.6,129.8 V122.5 H159.5 V118.5 H163 V115.5 H165.5 V122.5 H168.5 V119.5 H171 V121.5 H174 V129.8" fill="none" stroke="#000" stroke-width="1.3" />
<path d="M185.5,129.5 V122.5 H188.5 V119 H191.5 V116 H194.5 V116.5 H197.5 V119.5 H200.5 V121 H202 V129.5 M188.5,129.5 V122.5 M191.5,129.5 V119 M194.5,129.5 V116.5 M197.5,129.5 V119.5 M200.5,129.5 V121" fill="none" stroke="#000" stroke-width="1.2" />
<path d="M218.5,112 h19 v18.5 h-19 z" fill="none" stroke="#000" stroke-width="1.3" />
<path d="M219,114.3 h18.5" fill="none" stroke="#000" stroke-width="1.0" />
<path d="M222.5,116.3 h12.5 v3 h-12.5 z M228.5,121.5 h7.5 v2.5 h-7.5 z M228.5,126 h7.5 v2.5 h-7.5 z" fill="none" stroke="#000" stroke-width="1.0" />
<path d="M221,122.5 h5 M221,127 h5" fill="none" stroke="#000" stroke-width="1.0" stroke-dasharray="1,1"/>
<text x="256" y="125.4" font-family='"Liberation Serif", serif' font-size="13.5" text-anchor="middle" stroke="#000" stroke-width="0.15" textLength="20.5" lengthAdjust="spacingAndGlyphs">Mrk</text>
<path d="M283.6,112 V129.5 H298.6" fill="none" stroke="#000" stroke-width="1.3" />
<path d="M287.5,112.5 h7.5 M287.5,127 h7.5 M291.2,113 v13.5" fill="none" stroke="#000" stroke-width="1.2" />
<path d="M289,115.5 l2.2,-2.5 l2.2,2.5 z M289,124 l2.2,2.5 l2.2,-2.5 z" fill="#000" stroke="#000" stroke-width="0.6" />
<rect x="3" y="137" width="1" height="518" fill="#808080" />
<rect x="4" y="137" width="1" height="518" fill="#ffffff" />
<rect x="1276" y="137" width="1" height="518" fill="#a0a0a0" />
<rect x="3" y="655" width="1274" height="1" fill="#ffffff" />
<rect x="8" y="140" width="10" height="10" fill="#808080" />
<rect x="9" y="141" width="8" height="8" fill="#f8f8f8" />
<rect x="11" y="145" width="4" height="1" fill="#000" />
<text x="610.2" y="148.8" font-family='"Liberation Sans", sans-serif' font-size="12" fill="#000" text-anchor="start" textLength="19" lengthAdjust="spacingAndGlyphs" stroke="#000" stroke-width="0.18" >Left</text>
<rect x="62" y="155" width="1116" height="459" fill="#fdfddb" />
<rect x="71" y="155" width="1" height="459" fill="#8a8a72" />
<rect x="98" y="155" width="1" height="459" fill="#8a8a72" />
<rect x="120" y="155" width="1" height="459" fill="#8a8a72" />
<rect x="140" y="155" width="1" height="459" fill="#8a8a72" />
<rect x="157" y="155" width="1" height="459" fill="#8a8a72" />
<rect x="172" y="155" width="1" height="459" fill="#8a8a72" />
<rect x="274" y="155" width="1" height="459" fill="#8a8a72" />
<rect x="333" y="155" width="1" height="459" fill="#8a8a72" />
<rect x="375" y="155" width="1" height="459" fill="#8a8a72" />
<rect x="408" y="155" width="1" height="459" fill="#8a8a72" />
<rect x="435" y="155" width="1" height="459" fill="#8a8a72" />
<rect x="457" y="155" width="1" height="459" fill="#8a8a72" />
<rect x="477" y="155" width="1" height="459" fill="#8a8a72" />
<rect x="494" y="155" width="1" height="459" fill="#8a8a72" />
<rect x="509" y="155" width="1" height="459" fill="#8a8a72" />
<rect x="611" y="155" width="1" height="459" fill="#8a8a72" />
<rect x="670" y="155" width="1" height="459" fill="#8a8a72" />
<rect x="712" y="155" width="1" height="459" fill="#8a8a72" />
<rect x="745" y="155" width="1" height="459" fill="#8a8a72" />
<rect x="772" y="155" width="1" height="459" fill="#8a8a72" />
<rect x="794" y="155" width="1" height="459" fill="#8a8a72" />
<rect x="814" y="155" width="1" height="459" fill="#8a8a72" />
<rect x="831" y="155" width="1" height="459" fill="#8a8a72" />
<rect x="846" y="155" width="1" height="459" fill="#8a8a72" />
<rect x="948" y="155" width="1" height="459" fill="#8a8a72" />
<rect x="1007" y="155" width="1" height="459" fill="#8a8a72" />
<rect x="1049" y="155" width="1" height="459" fill="#8a8a72" />
<rect x="1082" y="155" width="1" height="459" fill="#8a8a72" />
<rect x="1109" y="155" width="1" height="459" fill="#8a8a72" />
<rect x="1131" y="155" width="1" height="459" fill="#8a8a72" />
<rect x="1151" y="155" width="1" height="459" fill="#8a8a72" />
<rect x="1168" y="155" width="1" height="459" fill="#8a8a72" />
<rect x="62" y="187" width="1116" height="1" fill="#8a8a72" />
<rect x="62" y="220" width="1116" height="1" fill="#8a8a72" />
<rect x="62" y="253" width="1116" height="1" fill="#8a8a72" />
<rect x="62" y="286" width="1116" height="1" fill="#8a8a72" />
<rect x="62" y="319" width="1116" height="1" fill="#8a8a72" />
<rect x="62" y="351" width="1116" height="1" fill="#8a8a72" />
<rect x="62" y="384" width="1116" height="1" fill="#8a8a72" />
<rect x="62" y="417" width="1116" height="1" fill="#8a8a72" />
<rect x="62" y="450" width="1116" height="1" fill="#8a8a72" />
<rect x="62" y="483" width="1116" height="1" fill="#8a8a72" />
<rect x="62" y="516" width="1116" height="1" fill="#8a8a72" />
<rect x="62" y="548" width="1116" height="1" fill="#8a8a72" />
<rect x="62" y="581" width="1116" height="1" fill="#8a8a72" />
<rect x="62" y="614" width="1116" height="1" fill="#8a8a72" />
<rect x="60" y="153" width="1118" height="2" fill="#8a8a80" />
<rect x="60" y="153" width="2" height="475" fill="#8a8a80" />
<rect x="59" y="154" width="2" height="1" fill="#000" />
<rect x="59" y="187" width="2" height="1" fill="#000" />
<rect x="59" y="220" width="2" height="1" fill="#000" />
<rect x="59" y="253" width="2" height="1" fill="#000" />
<rect x="59" y="286" width="2" height="1" fill="#000" />
<rect x="59" y="319" width="2" height="1" fill="#000" />
<rect x="59" y="351" width="2" height="1" fill="#000" />
<rect x="59" y="384" width="2" height="1" fill="#000" />
<rect x="59" y="417" width="2" height="1" fill="#000" />
<rect x="59" y="450" width="2" height="1" fill="#000" />
<rect x="59" y="483" width="2" height="1" fill="#000" />
<rect x="59" y="516" width="2" height="1" fill="#000" />
<rect x="59" y="548" width="2" height="1" fill="#000" />
<rect x="59" y="581" width="2" height="1" fill="#000" />
<rect x="59" y="614" width="2" height="1" fill="#000" />
<rect x="62" y="615" width="1115" height="12" fill="#f8f8f8" />
<rect x="62" y="615" width="16" height="11" fill="#f0f0f0" />
<rect x="77" y="615" width="1" height="12" fill="#696969" />
<rect x="62" y="626" width="16" height="1" fill="#696969" />
<path d="M67.5,620.5 L71,617.5 L71,623.5 Z" fill="#000"/>
<rect x="1161" y="615" width="16" height="11" fill="#f0f0f0" />
<rect x="1176" y="615" width="1" height="12" fill="#696969" />
<rect x="1161" y="626" width="16" height="1" fill="#696969" />
<path d="M1171,620.5 L1167.5,617.5 L1167.5,623.5 Z" fill="#000"/>
<rect x="710" y="615" width="16" height="11" fill="#ececec" />
<rect x="725" y="615" width="1" height="12" fill="#606060" />
<rect x="710" y="625" width="16" height="1" fill="#606060" />
<rect x="71" y="626" width="1" height="3" fill="#202020" />
<rect x="98" y="626" width="1" height="3" fill="#202020" />
<rect x="120" y="626" width="1" height="3" fill="#202020" />
<rect x="140" y="626" width="1" height="3" fill="#202020" />
<rect x="157" y="626" width="1" height="3" fill="#202020" />
<rect x="172" y="626" width="1" height="3" fill="#202020" />
<rect x="274" y="626" width="1" height="3" fill="#202020" />
<rect x="333" y="626" width="1" height="3" fill="#202020" />
<rect x="375" y="626" width="1" height="3" fill="#202020" />
<rect x="408" y="626" width="1" height="3" fill="#202020" />
<rect x="435" y="626" width="1" height="3" fill="#202020" />
<rect x="457" y="626" width="1" height="3" fill="#202020" />
<rect x="477" y="626" width="1" height="3" fill="#202020" />
<rect x="494" y="626" width="1" height="3" fill="#202020" />
<rect x="509" y="626" width="1" height="3" fill="#202020" />
<rect x="611" y="626" width="1" height="3" fill="#202020" />
<rect x="670" y="626" width="1" height="3" fill="#202020" />
<rect x="712" y="626" width="1" height="3" fill="#202020" />
<rect x="745" y="626" width="1" height="3" fill="#202020" />
<rect x="772" y="626" width="1" height="3" fill="#202020" />
<rect x="794" y="626" width="1" height="3" fill="#202020" />
<rect x="814" y="626" width="1" height="3" fill="#202020" />
<rect x="831" y="626" width="1" height="3" fill="#202020" />
<rect x="846" y="626" width="1" height="3" fill="#202020" />
<rect x="948" y="626" width="1" height="3" fill="#202020" />
<rect x="1007" y="626" width="1" height="3" fill="#202020" />
<rect x="1049" y="626" width="1" height="3" fill="#202020" />
<rect x="1082" y="626" width="1" height="3" fill="#202020" />
<rect x="1109" y="626" width="1" height="3" fill="#202020" />
<rect x="1131" y="626" width="1" height="3" fill="#202020" />
<rect x="1151" y="626" width="1" height="3" fill="#202020" />
<rect x="1168" y="626" width="1" height="3" fill="#202020" />
<text x="97.6" y="640.3" font-family='"Liberation Sans", sans-serif' font-size="11.5" fill="#000" text-anchor="middle" stroke="#000" stroke-width="0.18" >60</text>
<text x="139.7" y="640.3" font-family='"Liberation Sans", sans-serif' font-size="11.5" fill="#000" text-anchor="middle" stroke="#000" stroke-width="0.18" >80</text>
<text x="172.4" y="640.3" font-family='"Liberation Sans", sans-serif' font-size="11.5" fill="#000" text-anchor="middle" stroke="#000" stroke-width="0.18" >100</text>
<text x="273.8" y="640.3" font-family='"Liberation Sans", sans-serif' font-size="11.5" fill="#000" text-anchor="middle" stroke="#000" stroke-width="0.18" >200</text>
<text x="333.2" y="640.3" font-family='"Liberation Sans", sans-serif' font-size="11.5" fill="#000" text-anchor="middle" stroke="#000" stroke-width="0.18" >300</text>
<text x="375.3" y="640.3" font-family='"Liberation Sans", sans-serif' font-size="11.5" fill="#000" text-anchor="middle" stroke="#000" stroke-width="0.18" >400</text>
<text x="434.6" y="640.3" font-family='"Liberation Sans", sans-serif' font-size="11.5" fill="#000" text-anchor="middle" stroke="#000" stroke-width="0.18" >600</text>
<text x="476.7" y="640.3" font-family='"Liberation Sans", sans-serif' font-size="11.5" fill="#000" text-anchor="middle" stroke="#000" stroke-width="0.18" >800</text>
<text x="509.4" y="640.3" font-family='"Liberation Sans", sans-serif' font-size="11.5" fill="#000" text-anchor="middle" stroke="#000" stroke-width="0.18" >1.0k</text>
<text x="610.8" y="640.3" font-family='"Liberation Sans", sans-serif' font-size="11.5" fill="#000" text-anchor="middle" stroke="#000" stroke-width="0.18" >2.0k</text>
<text x="670.2" y="640.3" font-family='"Liberation Sans", sans-serif' font-size="11.5" fill="#000" text-anchor="middle" stroke="#000" stroke-width="0.18" >3.0k</text>
<text x="712.3" y="640.3" font-family='"Liberation Sans", sans-serif' font-size="11.5" fill="#000" text-anchor="middle" stroke="#000" stroke-width="0.18" >4.0k</text>
<text x="771.6" y="640.3" font-family='"Liberation Sans", sans-serif' font-size="11.5" fill="#000" text-anchor="middle" stroke="#000" stroke-width="0.18" >6.0k</text>
<text x="813.7" y="640.3" font-family='"Liberation Sans", sans-serif' font-size="11.5" fill="#000" text-anchor="middle" stroke="#000" stroke-width="0.18" >8.0k</text>
<text x="846.4" y="640.3" font-family='"Liberation Sans", sans-serif' font-size="11.5" fill="#000" text-anchor="middle" stroke="#000" stroke-width="0.18" >10.0k</text>
<text x="947.8" y="640.3" font-family='"Liberation Sans", sans-serif' font-size="11.5" fill="#000" text-anchor="middle" stroke="#000" stroke-width="0.18" >20.0k</text>
<text x="1007.2" y="640.3" font-family='"Liberation Sans", sans-serif' font-size="11.5" fill="#000" text-anchor="middle" stroke="#000" stroke-width="0.18" >30.0k</text>
<text x="1049.3" y="640.3" font-family='"Liberation Sans", sans-serif' font-size="11.5" fill="#000" text-anchor="middle" stroke="#000" stroke-width="0.18" >40.0k</text>
<text x="1082.0" y="640.3" font-family='"Liberation Sans", sans-serif' font-size="11.5" fill="#000" text-anchor="middle" stroke="#000" stroke-width="0.18" >50.0k</text>
<text x="1131.2" y="640.3" font-family='"Liberation Sans", sans-serif' font-size="11.5" fill="#000" text-anchor="middle" stroke="#000" stroke-width="0.18" >70.0k</text>
<text x="1168.0" y="640.3" font-family='"Liberation Sans", sans-serif' font-size="11.5" fill="#000" text-anchor="middle" stroke="#000" stroke-width="0.18" >90.0k</text>
<text x="640.5" y="651.5" font-family='"Liberation Sans", sans-serif' font-size="11.5" fill="#000" text-anchor="middle" stroke="#000" stroke-width="0.18" >Frequency (Hz)</text>
<text x="56" y="159.1" font-family='"Liberation Sans", sans-serif' font-size="11.5" fill="#000" text-anchor="end" stroke="#000" stroke-width="0.18" >10.0</text>
<text x="56" y="192.1" font-family='"Liberation Sans", sans-serif' font-size="11.5" fill="#000" text-anchor="end" stroke="#000" stroke-width="0.18" >0.0</text>
<text x="56" y="225.1" font-family='"Liberation Sans", sans-serif' font-size="11.5" fill="#000" text-anchor="end" stroke="#000" stroke-width="0.18" >-10.0</text>
<text x="56" y="258.1" font-family='"Liberation Sans", sans-serif' font-size="11.5" fill="#000" text-anchor="end" stroke="#000" stroke-width="0.18" >-20.0</text>
<text x="56" y="291.1" font-family='"Liberation Sans", sans-serif' font-size="11.5" fill="#000" text-anchor="end" stroke="#000" stroke-width="0.18" >-30.0</text>
<text x="56" y="324.1" font-family='"Liberation Sans", sans-serif' font-size="11.5" fill="#000" text-anchor="end" stroke="#000" stroke-width="0.18" >-40.0</text>
<text x="56" y="356.1" font-family='"Liberation Sans", sans-serif' font-size="11.5" fill="#000" text-anchor="end" stroke="#000" stroke-width="0.18" >-50.0</text>
<text x="56" y="389.1" font-family='"Liberation Sans", sans-serif' font-size="11.5" fill="#000" text-anchor="end" stroke="#000" stroke-width="0.18" >-60.0</text>
<text x="56" y="422.1" font-family='"Liberation Sans", sans-serif' font-size="11.5" fill="#000" text-anchor="end" stroke="#000" stroke-width="0.18" >-70.0</text>
<text x="56" y="455.1" font-family='"Liberation Sans", sans-serif' font-size="11.5" fill="#000" text-anchor="end" stroke="#000" stroke-width="0.18" >-80.0</text>
<text x="56" y="488.1" font-family='"Liberation Sans", sans-serif' font-size="11.5" fill="#000" text-anchor="end" stroke="#000" stroke-width="0.18" >-90.0</text>
<text x="56" y="521.1" font-family='"Liberation Sans", sans-serif' font-size="11.5" fill="#000" text-anchor="end" stroke="#000" stroke-width="0.18" >-100.0</text>
<text x="56" y="553.1" font-family='"Liberation Sans", sans-serif' font-size="11.5" fill="#000" text-anchor="end" stroke="#000" stroke-width="0.18" >-110.0</text>
<text x="56" y="586.1" font-family='"Liberation Sans", sans-serif' font-size="11.5" fill="#000" text-anchor="end" stroke="#000" stroke-width="0.18" >-120.0</text>
<text x="56" y="619.1" font-family='"Liberation Sans", sans-serif' font-size="11.5" fill="#000" text-anchor="end" stroke="#000" stroke-width="0.18" >-130.0</text>
<text x="0" y="0" transform="translate(20.3,390) rotate(-90)" font-family='"Liberation Sans", sans-serif' font-size="12" text-anchor="middle" stroke="#000" stroke-width="0.18" textLength="47.5" lengthAdjust="spacingAndGlyphs">dBV rms</text>
<rect x="1185" y="154" width="1" height="474" fill="#8a8a80" />
<rect x="1186" y="154" width="20" height="1" fill="#8a8a80" />
<rect x="1186" y="155" width="20" height="459" fill="#fdfddb" />
<rect x="1186" y="614" width="20" height="14" fill="#f8f8f8" />
<rect x="1188" y="209" width="15" height="405" fill="#0000ff" />
<rect x="1206" y="154" width="2" height="1" fill="#000" />
<text x="1211" y="159.1" font-family='"Liberation Sans", sans-serif' font-size="11.5" fill="#000" text-anchor="start" stroke="#000" stroke-width="0.18" >10.0</text>
<rect x="1206" y="187" width="2" height="1" fill="#000" />
<text x="1211" y="192.1" font-family='"Liberation Sans", sans-serif' font-size="11.5" fill="#000" text-anchor="start" stroke="#000" stroke-width="0.18" >0.0</text>
<rect x="1206" y="220" width="2" height="1" fill="#000" />
<text x="1211" y="225.1" font-family='"Liberation Sans", sans-serif' font-size="11.5" fill="#000" text-anchor="start" stroke="#000" stroke-width="0.18" >-10.0</text>
<rect x="1206" y="253" width="2" height="1" fill="#000" />
<text x="1211" y="258.1" font-family='"Liberation Sans", sans-serif' font-size="11.5" fill="#000" text-anchor="start" stroke="#000" stroke-width="0.18" >-20.0</text>
<rect x="1206" y="286" width="2" height="1" fill="#000" />
<text x="1211" y="291.1" font-family='"Liberation Sans", sans-serif' font-size="11.5" fill="#000" text-anchor="start" stroke="#000" stroke-width="0.18" >-30.0</text>
<rect x="1206" y="319" width="2" height="1" fill="#000" />
<text x="1211" y="324.1" font-family='"Liberation Sans", sans-serif' font-size="11.5" fill="#000" text-anchor="start" stroke="#000" stroke-width="0.18" >-40.0</text>
<rect x="1206" y="351" width="2" height="1" fill="#000" />
<text x="1211" y="356.1" font-family='"Liberation Sans", sans-serif' font-size="11.5" fill="#000" text-anchor="start" stroke="#000" stroke-width="0.18" >-50.0</text>
<rect x="1206" y="384" width="2" height="1" fill="#000" />
<text x="1211" y="389.1" font-family='"Liberation Sans", sans-serif' font-size="11.5" fill="#000" text-anchor="start" stroke="#000" stroke-width="0.18" >-60.0</text>
<rect x="1206" y="417" width="2" height="1" fill="#000" />
<text x="1211" y="422.1" font-family='"Liberation Sans", sans-serif' font-size="11.5" fill="#000" text-anchor="start" stroke="#000" stroke-width="0.18" >-70.0</text>
<rect x="1206" y="450" width="2" height="1" fill="#000" />
<text x="1211" y="455.1" font-family='"Liberation Sans", sans-serif' font-size="11.5" fill="#000" text-anchor="start" stroke="#000" stroke-width="0.18" >-80.0</text>
<rect x="1206" y="483" width="2" height="1" fill="#000" />
<text x="1211" y="488.1" font-family='"Liberation Sans", sans-serif' font-size="11.5" fill="#000" text-anchor="start" stroke="#000" stroke-width="0.18" >-90.0</text>
<rect x="1206" y="516" width="2" height="1" fill="#000" />
<text x="1211" y="521.1" font-family='"Liberation Sans", sans-serif' font-size="11.5" fill="#000" text-anchor="start" stroke="#000" stroke-width="0.18" >-100.0</text>
<rect x="1206" y="548" width="2" height="1" fill="#000" />
<text x="1211" y="553.1" font-family='"Liberation Sans", sans-serif' font-size="11.5" fill="#000" text-anchor="start" stroke="#000" stroke-width="0.18" >-110.0</text>
<rect x="1206" y="581" width="2" height="1" fill="#000" />
<text x="1211" y="586.1" font-family='"Liberation Sans", sans-serif' font-size="11.5" fill="#000" text-anchor="start" stroke="#000" stroke-width="0.18" >-120.0</text>
<rect x="1206" y="614" width="2" height="1" fill="#000" />
<text x="1211" y="619.1" font-family='"Liberation Sans", sans-serif' font-size="11.5" fill="#000" text-anchor="start" stroke="#000" stroke-width="0.18" >-130.0</text>
<text x="1186.5" y="640.3" font-family='"Liberation Sans", sans-serif' font-size="11.5" fill="#000" text-anchor="start" stroke="#000" stroke-width="0.18" >Pwr A</text>
<rect x="1192" y="643" width="10" height="10" fill="#808080" />
<rect x="1193" y="644" width="8" height="8" fill="#f8f8f8" />
<rect x="1195" y="647.5" width="4" height="1.3" fill="#000" />
<rect x="1265" y="643" width="10" height="10" fill="#808080" />
<rect x="1266" y="644" width="8" height="8" fill="#f8f8f8" />
<rect x="1267" y="647.4" width="6" height="1.4" fill="#000" />
<rect x="1269.3" y="645" width="1.4" height="6" fill="#000" />
<polyline fill="none" stroke="#2424c8" stroke-width="1.05" stroke-linejoin="round" points="62,614.5 226.3,614.5 228,600 230,584 231.9,578.8 233.5,583 236,598 240.3,614.5 301.5,614.5 303.5,596 305,582 306,576.3 307.3,580 309.5,598 311.5,614.5 332,614.5 333.75,611.3 336,614.5 351.5,614.5 352.5,608.5 353.5,589.8 354.6,569 355.6,561.7 356.7,569 358.2,579.4 359.3,596 360.3,608.5 362.9,613.75 366,613.2 370.2,613.75 373.3,611.7 375.4,605.4 377.5,609.6 380.1,613.75 383.75,610.6 385.8,611.7 388,610.6 389.5,613.2 391.6,604.4 393.1,585.6 394.7,593 396.25,609.6 398.3,611.7 401.5,610.6 405.1,604.4 408.75,608.5 410.8,613.2 414,610.6 417.1,610.6 420.2,606.5 421.8,576.25 423.9,576.25 424.9,594 425.9,608.5 428.5,609.6 431.7,607.5 434.8,606 437.9,607 441,608 444.2,607.5 445.7,594 447.3,586.7 448.9,595 449.9,606.5 452,602.8 454.6,609 456.7,604.4 459.8,605.4 460.2,607.5 462.3,601.25 464.4,591.4 465.9,598 467.5,597 468.5,602.3 470.1,607.5 473.75,604.4 476.4,601.8 477.9,595 480,604.4 483.1,601.8 484.7,594 486.25,583.5 487.8,590.8 488.9,606.5 490.9,602.3 494.6,598.6 497.7,600.2 499.8,604.4 502.9,592.4 505,598 506.6,585.6 508.6,598 510.2,557.5 511.25,559.6 511.8,578.3 512.8,597 514.9,598 517.5,593 519.1,600.2 521.7,599.7 524.3,590.8 527.4,598 532.1,593 535.7,590.8 538.3,584.6 539.9,578.3 542.5,576.25 544.6,565.8 546.7,563.75 549.3,565.8 551.9,580.4 556,590.8 559.2,593 560.2,588.75 562.3,599.2 564.4,588.75 566.5,586.7 567.5,600.2 570.6,598 572.17,596.84 573.75,594 575.27,598.27 576.8,601.25 578.35,600.83 579.9,598 581.7,594.96 583.5,590.8 585.1,596.58 586.7,600.2 588.75,589.3 590.3,602.3 592.4,596 593.97,598.64 595.53,598.96 597.1,601.25 598.48,600.55 599.87,597.23 601.25,596 603.3,589.3 605.4,601.25 606.7,596.74 608,590.3 610.1,599.2 612.2,583.5 613.75,599.2 615.13,600.62 616.52,600.35 617.9,601.8 619.45,597.81 621,591.9 622.6,597.98 624.2,601.25 625.57,600.79 626.93,598.35 628.3,598 629.7,599.92 631.1,597.93 632.5,600.2 633.9,598.19 635.3,593.01 636.7,590.8 639.3,599.2 640.87,598.71 642.43,594.53 644,593 645.55,588.14 647.1,580.4 648.4,579.4 649.7,576.8 652.3,581.5 653.7,586.97 655.1,590.55 656.5,596 658.05,597.38 659.6,597.1 661.33,596.39 663.07,592.22 664.8,590.8 666.9,600.2 668.7,596.63 670.5,590.8 672.35,595.6 674.2,598 675.57,597.9 676.93,594.91 678.3,595 679.6,597.65 680.9,599.2 682.35,598.45 683.8,595.89 685.25,596.54 686.7,594 688.25,595.96 689.8,596 691.3,594.23 692.8,590.8 694.9,592.9 696.2,590.39 697.5,585.6 699.1,589.8 700.47,589.05 701.83,585.52 703.2,584.6 705.8,576.25 709,565.3 711.6,573.1 713.1,579.4 714.7,591.9 716.5,595.32 718.3,596 719.7,596.23 721.1,593.18 722.5,592.9 723.9,595.06 725.3,593.9 726.7,596 728.07,597.83 729.43,595.44 730.8,597.1 732.4,596.05 734,593.4 735.37,595.84 736.73,594.52 738.1,596 739.67,595.4 741.25,591.57 742.83,592.0 744.4,589.8 746.5,579.4 749.1,569 751.1,559.6 753.2,567.9 754.8,578.3 756.9,587.7 762.1,592.9 763.48,594.29 764.87,593.11 766.25,594 767.8,594.53 769.35,591.26 770.9,591.9 772.5,578.3 774.6,586.7 776.7,587.7 780.8,583.5 784,576.25 786,581.5 788.1,589.8 789.5,591.26 790.9,589.01 792.3,590.8 793.6,588.78 794.9,585.1 796.5,592.9 797.87,594.86 799.23,593.15 800.6,595 802.0,593.7 803.4,589.14 804.8,587.7 807.3,581.5 808.9,571 810.9,562.2 812.5,566.9 813.5,578.3 815.1,588.75 817.2,592.9 819.3,596 820.85,596.12 822.4,593.4 824.2,593.64 826,590.8 827.6,591.31 829.2,589.8 832.3,580.4 834.4,584.6 837.5,592.9 839.05,596.22 840.6,597.1 842.33,597.28 844.07,595.1 845.8,596 847.2,595.47 848.6,590.94 850,590.8 853.1,575.2 855.2,584.6 856.8,598 859.4,601.8 861.5,598 865.6,595 869.8,585.6 872.9,595 877.1,604.4 880.2,605.4 883.3,602.3 885.9,587.2 888.5,603.3 891.7,609.1 895.8,605.4 899.5,592.9 902.6,608.5 905.2,611.7 906.8,608.5 908.9,611.1 912,601.25 914.1,611.7 915.6,600.2 917.2,614.5 921.25,614.5 921.7,610.8 922.9,608.3 924.2,606.7 924.2,594 925.3,593 925.3,572.4 925.5,593 926.6,594 926.6,614.5 932.5,614.5 932.5,594 933.7,593 933.7,573.8 933.9,593 934.9,594 934.9,614.5 940.5,614.5 940.5,417.8 941.3,417 941.3,219.4 941.6,219.4 941.6,417 942.5,417.8 942.5,614.5 947.5,614.5 947.5,417.8 948.4,417 948.4,220 948.7,220 948.7,417 949.5,417.8 949.5,614.5 955.4,614.5 955.4,596 956.6,595 956.6,576.7 956.8,595 957.9,596 957.9,614.5 961.7,614.5 961.7,598 962.9,597 962.9,579.2 963.1,597 964.2,598 964.2,614.5 1041.2,614.5 1041.2,607 1042.5,606 1042.5,598.3 1042.7,606 1043.9,607 1043.9,614.5 1045.3,614.5 1045.3,592 1046.4,591 1046.4,570.3 1046.6,591 1047.5,592 1047.5,614.5 1048.4,614.5 1048.4,604 1049.8,603 1049.8,592.9 1050,603 1051.4,604 1051.4,614.5 1103.1,614.5 1104,609 1104.9,611 1105.8,608.7 1107.1,611.9 1108,609.6 1109,614.5 1111.2,613.7 1111.7,608.25 1112.6,593.8 1113.6,581.2 1114.4,573.5 1116.2,583.9 1117.5,574 1119.3,576.2 1121.1,583.9 1122.9,573.5 1123.8,581.2 1124.7,593.8 1125.6,609.2 1126.1,614.5 1171.2,614.5 1173,612.8 1174.4,608.25 1175.5,605"/>
<rect x="1167" y="10" width="9" height="1" fill="#000" />
<path d="M1209.5,8.5 h6 v6 h-6 z M1211.5,8.5 v-2 h6 v6 h-2" fill="none" stroke="#000" stroke-width="1"/>
<path d="M1252,5.5 L1261.5,15 M1261.5,5.5 L1252,15" stroke="#000" stroke-width="1.1"/>
<rect x="1228" y="24" width="1" height="17" fill="#ececec" />
<rect x="1243" y="24" width="1" height="17" fill="#ececec" />
<rect x="1261" y="24" width="1" height="17" fill="#ececec" />
<rect x="1231" y="33" width="6" height="2" fill="#5c6474" />
<path d="M1249.5,30.5 h5 v4 h-5 z M1251.5,30.5 v-2.5 h5 v4 h-2" fill="none" stroke="#5c6474" stroke-width="1.3"/>
<path d="M1268,28.5 L1274,34.5 M1274,28.5 L1268,34.5" stroke="#5c6474" stroke-width="1.6"/>
<rect x="4" y="4" width="15" height="15" fill="#282828" />
<rect x="5" y="5" width="13" height="13" fill="#ffffff" />
<path d="M5.5,6 l2,1.5 l2,-1 l2,1 l2,-1 l3,2" fill="none" stroke="#d02020" stroke-width="1.2"/>
<path d="M5.5,7.5 l2,1.5 l2,0.5 l2,-1 l1.5,2.5 l1.5,0.5 l1.5,2" fill="none" stroke="#2020d0" stroke-width="1.4"/>
<text x="6" y="17.3" font-family='"Liberation Serif", serif' font-style="italic" font-weight="bold" font-size="8" fill="#000" textLength="11" lengthAdjust="spacingAndGlyphs">SC</text>
<rect x="7" y="23" width="15" height="15" fill="#5a5a5a" />
<rect x="8" y="24" width="13" height="13" fill="#ffffff" />
<rect x="10.5" y="24" width="1" height="13" fill="#c4c4c4" />
<rect x="8" y="26.5" width="13" height="1" fill="#c4c4c4" />
<rect x="13.5" y="24" width="1" height="13" fill="#c4c4c4" />
<rect x="8" y="29.5" width="13" height="1" fill="#c4c4c4" />
<rect x="16.5" y="24" width="1" height="13" fill="#c4c4c4" />
<rect x="8" y="32.5" width="13" height="1" fill="#c4c4c4" />
<rect x="19.5" y="24" width="1" height="13" fill="#c4c4c4" />
<rect x="8" y="35.5" width="13" height="1" fill="#c4c4c4" />
<path d="M8,26 l2.5,0.5 l2,1.5 l2,-1 l2,1 l2.5,1" fill="none" stroke="#c02040" stroke-width="1.3"/>
<path d="M8,28 l2.5,1 l2,1 l2,0 l2,2 l2.5,1.5" fill="none" stroke="#2030d0" stroke-width="1.5"/>
<rect x="7" y="37" width="15" height="1" fill="#303030" />
<rect x="21" y="23" width="1" height="15" fill="#303030" />
<defs><filter id="sh" x="-10%" y="-20%" width="130%" height="150%"><feGaussianBlur in="SourceAlpha" stdDeviation="2.5"/><feOffset dx="1" dy="2"/><feComponentTransfer><feFuncA type="linear" slope="0.3"/></feComponentTransfer><feMerge><feMergeNode/><feMergeNode in="SourceGraphic"/></feMerge></filter><clipPath id="c1"><rect x="132" y="224" width="154" height="31"/></clipPath><linearGradient id="pg" x1="0" x2="1" y1="0" y2="0"><stop offset="0" stop-color="#14e014"/><stop offset="0.35" stop-color="#30e018"/><stop offset="0.6" stop-color="#98c818"/><stop offset="0.85" stop-color="#d8b818"/><stop offset="1" stop-color="#e8b020"/></linearGradient><pattern id="seg" x="551" y="0" width="4" height="10" patternUnits="userSpaceOnUse"><rect x="0" y="0" width="3" height="10" fill="#ffffff" fill-opacity="0.12"/><rect x="3" y="0" width="1" height="10" fill="#000" fill-opacity="0.12"/></pattern></defs>
<rect x="132" y="196" width="155" height="59" fill="#ffffff" filter="url(#sh)"/>
<rect x="132" y="224" width="155" height="1" fill="#000" />
<rect x="132" y="224" width="1" height="31" fill="#000" />
<rect x="267" y="202.7" width="18" height="17" fill="#e8e8e8" />
<text x="139.8" y="213.7" font-family='"Liberation Sans", sans-serif' font-size="11.5" fill="#a0a0a0" text-anchor="start" stroke="#a0a0a0" stroke-width="0.18" >Peak Amplitude</text>
<g clip-path="url(#c1)">
<text x="141.5" y="249.9" font-family='"Liberation Sans", sans-serif' font-size="23" fill="#000" text-anchor="start" textLength="150" lengthAdjust="spacingAndGlyphs" >-9.62 dBV rms</text>
</g>
<rect x="313" y="194" width="155" height="60" fill="#ffffff" filter="url(#sh)"/>
<rect x="313" y="222" width="155" height="1" fill="#000" />
<rect x="313" y="222" width="1" height="32" fill="#000" />
<rect x="448" y="200.7" width="18" height="17" fill="#e8e8e8" />
<text x="321" y="211.7" font-family='"Liberation Sans", sans-serif' font-size="11.5" fill="#a0a0a0" text-anchor="start" stroke="#a0a0a0" stroke-width="0.18" >THD</text>
<text x="317" y="247.6" font-family='"Liberation Sans", sans-serif' font-size="23" fill="#000" text-anchor="start" textLength="123" lengthAdjust="spacingAndGlyphs" >0.000222 %</text>
<rect x="499" y="194" width="154" height="60" fill="#ffffff" filter="url(#sh)"/>
<rect x="499" y="222" width="154" height="1" fill="#000" />
<rect x="499" y="222" width="1" height="32" fill="#000" />
<rect x="634" y="200.7" width="18" height="17" fill="#e8e8e8" />
<text x="506" y="211.7" font-family='"Liberation Sans", sans-serif' font-size="11.5" fill="#a0a0a0" text-anchor="start" stroke="#a0a0a0" stroke-width="0.18" >IMD</text>
<text x="502" y="247.6" font-family='"Liberation Sans", sans-serif' font-size="23" fill="#000" text-anchor="start" textLength="123" lengthAdjust="spacingAndGlyphs" >0.000745 %</text>
<rect x="926" y="26" width="47" height="52" fill="#ffffff" filter="url(#sh)"/>
<rect x="954" y="29" width="18" height="17" fill="#ececec" />
<rect x="929" y="54" width="40" height="23" fill="#ffffff" />
<rect x="930" y="55" width="39" height="22" fill="#a0a0a0" />
<rect x="930" y="55" width="38" height="21" fill="#f0f0f0" />
<rect x="967" y="54" width="2" height="23" fill="#606060" />
<text x="937.7" y="70" font-family='"Liberation Sans", sans-serif' font-size="12" fill="#000" text-anchor="start" textLength="22.5" lengthAdjust="spacingAndGlyphs" stroke="#000" stroke-width="0.18" >Stop</text>
<rect x="0" y="656" width="1280" height="25" fill="#f0f0f0" />
<rect x="0" y="679" width="1280" height="2" fill="#ffffff" />
<rect x="5" y="659" width="111" height="1" fill="#a0a0a0" />
<rect x="5" y="659" width="1" height="17" fill="#a0a0a0" />
<text x="8.25" y="671" font-family='"Liberation Sans", sans-serif' font-size="11.7" fill="#000" text-anchor="start" textLength="52.5" lengthAdjust="spacingAndGlyphs" stroke="#000" stroke-width="0.18" >Running...</text>
<rect x="117" y="659" width="95" height="1" fill="#a0a0a0" />
<rect x="117" y="659" width="1" height="17" fill="#a0a0a0" />
<text x="120.9" y="671" font-family='"Liberation Sans", sans-serif' font-size="11.7" fill="#000" text-anchor="start" textLength="52.2" lengthAdjust="spacingAndGlyphs" stroke="#000" stroke-width="0.18" >Real Time</text>
<rect x="214" y="659" width="67" height="1" fill="#a0a0a0" />
<rect x="214" y="659" width="1" height="17" fill="#a0a0a0" />
<text x="217.5" y="671" font-family='"Liberation Sans", sans-serif' font-size="11.7" fill="#000" text-anchor="start" textLength="55.2" lengthAdjust="spacingAndGlyphs" stroke="#000" stroke-width="0.18" >192000 Hz</text>
<rect x="282" y="659" width="48" height="1" fill="#a0a0a0" />
<rect x="282" y="659" width="1" height="17" fill="#a0a0a0" />
<text x="285.5" y="671" font-family='"Liberation Sans", sans-serif' font-size="11.7" fill="#000" text-anchor="start" textLength="29.2" lengthAdjust="spacingAndGlyphs" stroke="#000" stroke-width="0.18" >24 Bit</text>
<rect x="332" y="659" width="48" height="1" fill="#a0a0a0" />
<rect x="332" y="659" width="1" height="17" fill="#a0a0a0" />
<text x="334.8" y="671" font-family='"Liberation Sans", sans-serif' font-size="11.7" fill="#000" text-anchor="start" textLength="28.3" lengthAdjust="spacingAndGlyphs" stroke="#000" stroke-width="0.18" >Mono</text>
<rect x="381" y="659" width="95" height="1" fill="#a0a0a0" />
<rect x="381" y="659" width="1" height="17" fill="#a0a0a0" />
<text x="384.8" y="671" font-family='"Liberation Sans", sans-serif' font-size="11.7" fill="#000" text-anchor="start" textLength="73.3" lengthAdjust="spacingAndGlyphs" stroke="#000" stroke-width="0.18" >FFT 65536 pts</text>
<rect x="478" y="659" width="68" height="1" fill="#a0a0a0" />
<rect x="478" y="659" width="1" height="17" fill="#a0a0a0" />
<text x="481.3" y="671" font-family='"Liberation Sans", sans-serif' font-size="11.7" fill="#000" text-anchor="start" textLength="33.8" lengthAdjust="spacingAndGlyphs" stroke="#000" stroke-width="0.18" >Kaiser</text>
<rect x="548" y="659" width="729" height="1" fill="#a0a0a0" />
<rect x="548" y="659" width="1" height="17" fill="#a0a0a0" />
<rect x="551" y="661" width="675" height="6" fill="url(#pg)" />
<rect x="551" y="661" width="675" height="6" fill="url(#seg)" />
<rect x="0" y="681" width="1280" height="39" fill="#1f3130" />
<rect x="0" y="681" width="1280" height="1" fill="#1a4f48" />
<rect x="0" y="682" width="1280" height="1" fill="#275a55" />
<rect x="0" y="683" width="1280" height="1" fill="#12383a" />
<rect x="0" y="0" width="2" height="681" fill="#237766" />
<rect x="1" y="0" width="1" height="681" fill="#16594d" />
<rect x="2" y="137" width="1" height="518" fill="#90a0a0" />
<rect x="1278" y="0" width="2" height="681" fill="#237766" />
<path d="M15,695.5 L21.8,694.6 L21.8,701.2 L15,701.2 Z M22.8,694.4 L30,693.5 L30,701.2 L22.8,701.2 Z M15,702.2 L21.8,702.2 L21.8,708.6 L15,707.8 Z M22.8,702.2 L30,702.2 L30,709.6 L22.8,708.8 Z" fill="#ffffff"/>
<path d="M60.6,697.5 v-3.5 M70.2,697.5 v-3.5 M60.6,704.6 v3.6 M70.2,704.6 v3.6" stroke="#f0f0f0" stroke-width="1.2"/><rect x="60.6" y="695.2" width="9.6" height="2.2" fill="#c8c8c8"/><rect x="60.6" y="698.3" width="9.6" height="5.6" fill="none" stroke="#f0f0f0" stroke-width="1.2"/><rect x="60.6" y="704.5" width="9.6" height="1.2" fill="#f0f0f0"/><path d="M73.6,694 v14.2" stroke="#f0f0f0" stroke-width="1.2"/><rect x="72.2" y="697.6" width="2.8" height="3" fill="#f0f0f0"/>
<defs><linearGradient id="edg" x1="0" y1="0" x2="0.6" y2="1"><stop offset="0" stop-color="#2aa0e8"/><stop offset="1" stop-color="#1458b8"/></linearGradient><linearGradient id="edg2" x1="0" y1="0" x2="1" y2="0.3"><stop offset="0" stop-color="#2cb0e0"/><stop offset="0.6" stop-color="#40c8a0"/><stop offset="1" stop-color="#60d848"/></linearGradient></defs>
<circle cx="115.5" cy="701.3" r="11.6" fill="url(#edg)"/><path d="M104,701 C104.5,693.5 110.5,689.7 116,689.7 C123,689.7 127.2,695 127.2,700.5 C127.2,704.3 124.8,706.2 121.8,706.2 C119.5,706.2 118.3,704.6 118.3,702.6 C118.3,699.6 116.3,697.8 113.4,697.8 C109,697.8 105.8,700 104,702.5 Z" fill="url(#edg2)"/><path d="M110.3,703.8 C110.8,700.6 113.5,699.2 116,699.5 C117.7,699.8 118.3,701.2 118.3,702.6 C118.3,703.8 117.2,704.8 115.2,704.9 C113.2,705 111.5,704.5 110.3,703.8 Z" fill="#183a5a"/>
<path d="M150.5,694 h7 l2,2 h12.5 v14.5 h-21.5 Z" fill="#f0c040"/><rect x="150.5" y="697" width="21.5" height="13.5" fill="#ffd868"/><rect x="150.5" y="694" width="8" height="2" fill="#e8b030"/><path d="M155,710.5 v-6 h12 v6 h-3 v-3 h-6 v3 Z" fill="#2d7fd8"/>
<path d="M201,695.5 v-3 a2,2 0 0 1 2,-2 h8 a2,2 0 0 1 2,2 v3" fill="none" stroke="#3cb8d8" stroke-width="1.5"/><rect x="196" y="695" width="22" height="18" rx="3" fill="#f4f4f4"/><rect x="203" y="699" width="3.6" height="3.6" fill="#f25022"/><rect x="207.4" y="699" width="3.6" height="3.6" fill="#7fba00"/><rect x="203" y="703.4" width="3.6" height="3.6" fill="#00a4ef"/><rect x="207.4" y="703.4" width="3.6" height="3.6" fill="#ffb900"/>
<rect x="242" y="690" width="22.5" height="22.5" rx="1.5" fill="#2f5fd0"/><rect x="248" y="690.5" width="11" height="6.5" fill="#e8e8f0"/><rect x="255" y="691.5" width="2.5" height="4.5" fill="#2f5fd0"/><rect x="244.5" y="699.5" width="17.5" height="11.5" fill="#fafafa"/><path d="M246,702.5 h14 M246,705.5 h5 M246,708.5 h5" stroke="#d83030" stroke-width="1.1"/><text x="252" y="709.5" font-family='"Liberation Sans", sans-serif' font-size="5.5" fill="#404040">64</text>
<circle cx="299" cy="701.3" r="11.3" fill="#db4437"/><path d="M299,701.3 L289.2,695.6 A11.3,11.3 0 0 0 293.4,711.1 Z" fill="#0f9d58"/><path d="M299,701.3 L293.4,711.1 A11.3,11.3 0 0 0 309.2,696 L299,696 Z" fill="#f4b400"/><path d="M299,701.3 L288.6,696.5 A11.3,11.3 0 0 0 293.5,711.2 L299,701.3 Z" fill="#0f9d58"/><circle cx="299" cy="701.3" r="5.2" fill="#ffffff"/><circle cx="299" cy="701.3" r="4" fill="#4285f4"/>
<rect x="322" y="682" width="46" height="38" fill="#4a5453" />
<rect x="322" y="718" width="46" height="2" fill="#76b9ed" />
<rect x="334" y="690" width="22" height="22" fill="#111"/><rect x="335.5" y="691.5" width="19" height="19" fill="#fff"/><path d="M336,694 h18 M336,698 h18 M336,702 h18 M336,706 h18 M340,692 v18 M345,692 v18 M350,692 v18" stroke="#c0c0c0" stroke-width="0.6"/><path d="M336,693 l3,3 l3,-2 l3,5 l3,-1 l3,4 l3,1" fill="none" stroke="#d02828" stroke-width="1.3"/><path d="M336,695 l3,2 l3,1 l3,-2 l3,5 l3,1 l2,3" fill="none" stroke="#2030e0" stroke-width="1.4"/><text x="337" y="709.5" font-family='"Liberation Serif", serif' font-style="italic" font-size="11" fill="#000">SC</text>
<path d="M1076.5,703.5 L1082,698 L1087.5,703.5" fill="none" stroke="#e0e0e0" stroke-width="1.3"/>
<path d="M1097.5,701 h3 M1099,698 v6 M1098,697 v-1.5 M1100,697 v-1.5" stroke="#e8e8e8" stroke-width="1.2"/><rect x="1101.5" y="697.5" width="10" height="8" rx="1" fill="none" stroke="#e8e8e8" stroke-width="1.2"/><rect x="1103" y="699" width="7" height="5" fill="#e8e8e8"/>
<path d="M1122.5,707 A11,11 0 0 1 1133.5,696 M1125.5,707 A8,8 0 0 1 1133.5,699 M1128.5,707 A5,5 0 0 1 1133.5,702" fill="none" stroke="#8a9090" stroke-width="1.2"/><circle cx="1132.5" cy="706" r="1.5" fill="#f0f0f0"/>
<path d="M1142,699 h3 l4,-4 v13 l-4,-4 h-3 Z" fill="none" stroke="#e8e8e8" stroke-width="1.2"/><path d="M1151,698.5 a4,4 0 0 1 0,7 M1153.5,696.5 a7,7 0 0 1 0,11 M1156,694.5 a10,10 0 0 1 0,15" fill="none" stroke="#e8e8e8" stroke-width="1.2"/>
<rect x="1168.5" y="693.5" width="6" height="11" rx="3" fill="#e8e8e8"/><path d="M1166.5,701 a5,5 0 0 0 10,0 M1171.5,706 v3 M1169,709.3 h5" fill="none" stroke="#e8e8e8" stroke-width="1.1"/>
<rect x="1187.5" y="694.5" width="20.5" height="12" rx="1" fill="none" stroke="#e8e8e8" stroke-width="1.2"/><path d="M1190,698 h15 M1190,700.8 h15 M1191,703.8 h13" stroke="#e8e8e8" stroke-width="1.1" stroke-dasharray="2,1"/>
<text x="1244.5" y="696.8" font-family='"Liberation Sans", sans-serif' font-size="12" fill="#ffffff" text-anchor="middle" textLength="26" lengthAdjust="spacingAndGlyphs" stroke="#ffffff" stroke-width="0.18" >17:26</text>
<text x="1244.5" y="713.6" font-family='"Liberation Sans", sans-serif' font-size="12" fill="#ffffff" text-anchor="middle" textLength="51.5" lengthAdjust="spacingAndGlyphs" stroke="#ffffff" stroke-width="0.18" >09.01.2025</text>
<rect x="1275" y="682" width="1" height="38" fill="#6a7574" />
</svg></body></html>
